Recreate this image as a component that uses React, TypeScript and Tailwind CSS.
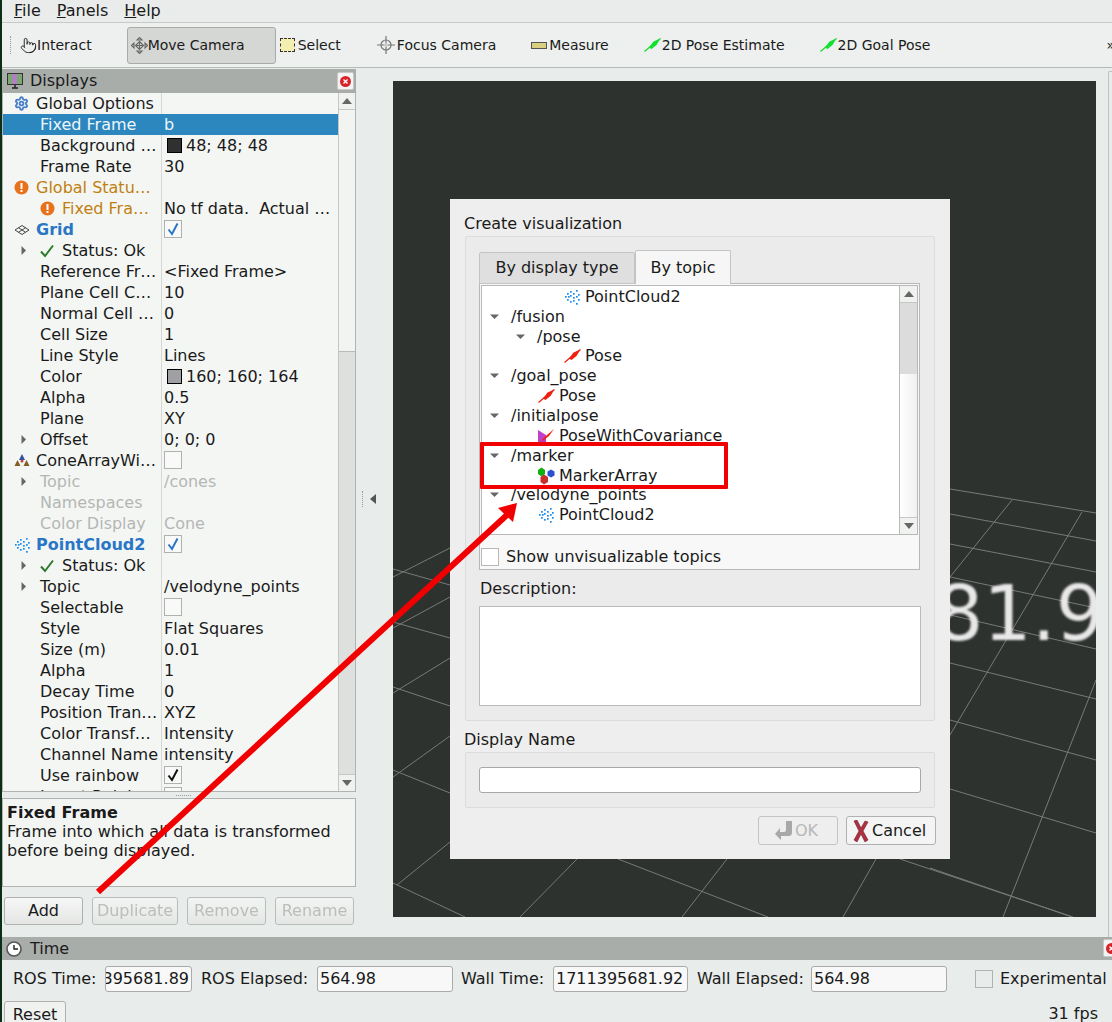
import { ReactNode } from "react";
import { Settings, Pointer } from "lucide-react";

type Row = {
  label: string;
  value?: string;
  kind: "top" | "child" | "warn";
  icon?: ReactNode;
  arrow?: boolean;
  tone?: "blue" | "orange" | "gray" | "white";
  swatch?: string;
  check?: "on" | "black" | "off";
};

function PointCloudIcon() {
  const pts = [[1,7],[3,4],[3,10],[6,2],[6,6],[6,12],[9,8],[9,4],[9,11],[12,1],[12,14],[12,7],[14,10],[4,7],[14,5]];
  return (
    <svg width="16" height="16" viewBox="0 0 16 16">
      {pts.map((p, i) => <rect key={i} x={p[0]} y={p[1]} width="1.7" height="1.7" fill="#1a8cf0" />)}
    </svg>
  );
}

function PoseIcon({ color = "#f02010" }: { color?: string }) {
  return (
    <svg width="17" height="14" viewBox="0 0 17 14">
      <path d="M0.5 13.5 L7 8 M9 6 L16.5 0.5" stroke={color} strokeWidth="1.3" fill="none" />
      <path d="M5 9.5 L9.5 3.5 L16.5 0.5 L12.5 7 L7.5 11 Z" fill={color} />
    </svg>
  );
}

function CovarianceIcon() {
  return (
    <svg width="17" height="16" viewBox="0 0 17 16">
      <path d="M0 2 L8 7 L8 14 L0 14 Z" fill="#c040c8" />
      <path d="M3 13 L9 7 L16 1 L11 8 L6 12 Z" fill="#f02010" />
    </svg>
  );
}

function MarkerIcon() {
  return (
    <svg width="17" height="18" viewBox="0 0 17 18">
      <path d="M0 3 L3.5 0.5 L7 3 L7 7 L3.5 9.5 L0 7 Z" fill="#10b010" />
      <path d="M9.5 4.5 L13 2.5 L16.5 4.5 L16.5 8.5 L13 10.5 L9.5 8.5 Z" fill="#2850d0" />
      <path d="M2.5 10 L6 7.5 L10 10 L10 15 L6 17.5 L2.5 15 Z" fill="#c83030" />
    </svg>
  );
}

function WarnIcon() {
  return (
    <svg width="15" height="15" viewBox="0 0 15 15">
      <circle cx="7.5" cy="7.5" r="7" fill="#e8711c" />
      <rect x="6.5" y="3" width="2" height="6" fill="#fff" />
      <rect x="6.5" y="10" width="2" height="2" fill="#fff" />
    </svg>
  );
}

function GridIcon() {
  return (
    <svg width="16" height="12" viewBox="0 0 16 12" fill="none" stroke="#444" strokeWidth="1">
      <path d="M1 6 L8 1.5 L15 6 L8 10.5 Z" />
      <path d="M4.5 3.7 L11.5 8.3 M11.5 3.7 L4.5 8.3" />
    </svg>
  );
}

function ConeIcon() {
  return (
    <svg width="16" height="14" viewBox="0 0 16 14">
      <path d="M8 0 L11 6 L5 6 Z" fill="#3050a0" />
      <path d="M3.5 6 L6.5 12 L0.5 12 Z" fill="#806020" />
      <path d="M12.5 6 L15.5 12 L9.5 12 Z" fill="#806020" />
      <circle cx="8" cy="7" r="1.5" fill="#c04040" />
    </svg>
  );
}

function TreeArrow({ open }: { open?: boolean }) {
  return (
    <svg width="10" height="10" viewBox="0 0 10 10" className="shrink-0">
      {open ? <path d="M0 2.5 H9 L4.5 7 Z" fill="#666" /> : <path d="M2.5 0 V9 L7 4.5 Z" fill="#666" />}
    </svg>
  );
}

function GreenCheck() {
  return (
    <svg width="14" height="14" viewBox="0 0 14 14" fill="none">
      <path d="M1 7.5 L5 12 L13 1.5" stroke="#2d7a2d" strokeWidth="2" />
    </svg>
  );
}

function CheckBox({ state }: { state: "on" | "black" | "off" }) {
  return (
    <span className="w-[18px] h-[18px] mb-px border border-[#aeb1ae] bg-[#f8f9f8] flex items-center justify-center">
      {state !== "off" && (
        <svg width="14" height="14" viewBox="0 0 14 14" fill="none">
          <path d="M2.5 7.5 L6 12 L11.5 1.5" stroke={state === "on" ? "#2a76c6" : "#111"} strokeWidth="2" />
        </svg>
      )}
    </span>
  );
}

const rows: Row[] = [
  { label: "Global Options", kind: "top", icon: <Settings size={15} color="#4a7fc9" strokeWidth={3} /> },
  { label: "Fixed Frame", value: "b", kind: "child", tone: "white" },
  { label: "Background …", value: "48; 48; 48", kind: "child", swatch: "bg-[#303030]" },
  { label: "Frame Rate", value: "30", kind: "child" },
  { label: "Global Statu…", kind: "top", tone: "orange", icon: <WarnIcon /> },
  { label: "Fixed Fra…", value: "No tf data.  Actual …", kind: "warn", tone: "orange", icon: <WarnIcon /> },
  { label: "Grid", kind: "top", tone: "blue", icon: <GridIcon />, check: "on" },
  { label: "Status: Ok", kind: "warn", arrow: true, icon: <GreenCheck /> },
  { label: "Reference Fr…", value: "<Fixed Frame>", kind: "child" },
  { label: "Plane Cell C…", value: "10", kind: "child" },
  { label: "Normal Cell …", value: "0", kind: "child" },
  { label: "Cell Size", value: "1", kind: "child" },
  { label: "Line Style", value: "Lines", kind: "child" },
  { label: "Color", value: "160; 160; 164", kind: "child", swatch: "bg-[#a0a0a4]" },
  { label: "Alpha", value: "0.5", kind: "child" },
  { label: "Plane", value: "XY", kind: "child" },
  { label: "Offset", value: "0; 0; 0", kind: "child", arrow: true },
  { label: "ConeArrayWi…", kind: "top", icon: <ConeIcon />, check: "off" },
  { label: "Topic", value: "/cones", kind: "child", arrow: true, tone: "gray" },
  { label: "Namespaces", kind: "child", tone: "gray" },
  { label: "Color Display", value: "Cone", kind: "child", tone: "gray" },
  { label: "PointCloud2", kind: "top", tone: "blue", icon: <PointCloudIcon />, check: "on" },
  { label: "Status: Ok", kind: "warn", arrow: true, icon: <GreenCheck /> },
  { label: "Topic", value: "/velodyne_points", kind: "child", arrow: true },
  { label: "Selectable", kind: "child", check: "off" },
  { label: "Style", value: "Flat Squares", kind: "child" },
  { label: "Size (m)", value: "0.01", kind: "child" },
  { label: "Alpha", value: "1", kind: "child" },
  { label: "Decay Time", value: "0", kind: "child" },
  { label: "Position Tran…", value: "XYZ", kind: "child" },
  { label: "Color Transf…", value: "Intensity", kind: "child" },
  { label: "Channel Name", value: "intensity", kind: "child" },
  { label: "Use rainbow", kind: "child", check: "black" },
  { label: "Invert Rainbow", kind: "child", check: "off" },
];

const toneClass = {
  blue: "text-[#2a76c6] font-bold",
  orange: "text-[#c08010]",
  gray: "text-[#b4b6b4]",
  white: "text-[#eef6fb]",
};

function DisplayRow({ row, selected }: { row: Row; selected?: boolean }) {
  const tone = row.tone ? toneClass[row.tone] : "text-[#1a1a1a]";
  const valueTone = row.tone === "gray" ? "text-[#b4b6b4]" : row.tone === "white" ? "text-[#eef6fb]" : "text-[#1a1a1a]";
  return (
    <div className={`flex h-[21px] shrink-0 items-center ${selected ? "bg-[#2d87bf]" : ""}`}>
      <div className={`flex items-center w-[159px] h-full overflow-hidden whitespace-nowrap ${row.kind === "top" ? "pl-[11px]" : "pl-[16px]"} ${selected ? "" : "border-r border-[#d5d8d5]"}`}>
        {row.kind === "top" ? (
          <span className="w-[22px] flex items-center shrink-0">{row.icon}</span>
        ) : (
          <>
            <span className="w-[21px] shrink-0 flex items-center">{row.arrow && <TreeArrow />}</span>
            {row.kind === "warn" && <span className="w-[22px] shrink-0 flex items-center">{row.icon}</span>}
          </>
        )}
        <span className={tone}>{row.label}</span>
      </div>
      <div className={`flex items-center pl-[2px] whitespace-pre ${valueTone}`}>
        {row.check && <CheckBox state={row.check} />}
        {row.swatch && <span className={`w-[15px] h-[15px] ml-[3px] mr-[4px] border border-black ${row.swatch}`} />}
        {row.value}
      </div>
    </div>
  );
}

function ScrollButton({ up }: { up?: boolean }) {
  return (
    <div className={`h-[17px] shrink-0 flex items-center justify-center bg-[#f0f2f0] ${up ? "border-b" : "border-t"} border-[#c4c7c4]`}>
      <svg width="10" height="6" viewBox="0 0 10 6">
        <path d={up ? "M0 6 H10 L5 0 Z" : "M0 0 H10 L5 6 Z"} fill="#666" />
      </svg>
    </div>
  );
}

function ToolButton({ icon, label, className = "" }: { icon: ReactNode; label: string; className?: string }) {
  return (
    <div className={`flex items-center h-[37px] shrink-0 ${className}`}>
      {icon}
      <span>{label}</span>
    </div>
  );
}

function Btn({ label, disabled, className = "" }: { label: string; disabled?: boolean; className?: string }) {
  return (
    <div className={`h-[28px] flex items-center justify-center rounded-[3px] border border-[#aeb1ae] bg-gradient-to-b from-[#f6f7f6] to-[#e4e6e4] shrink-0 ${disabled ? "text-[#b0b2b0] opacity-80" : "text-[#1a1a1a]"} ${className}`}>
      {label}
    </div>
  );
}

function TimeField({ label, value, className, labelClass }: { label: string; value: string; className: string; labelClass: string }) {
  return (
    <>
      <span className={`shrink-0 ${labelClass}`}>{label}</span>
      <div className={`h-[26px] shrink-0 rounded-[3px] border border-[#a8aba8] bg-[#f7f8f7] overflow-hidden whitespace-nowrap flex items-center pl-[2px] ${className}`}>
        {value}
      </div>
    </>
  );
}

function CloseBtn() {
  return (
    <div className="w-[17px] h-[18px] bg-[#f4f4f4] rounded-[2px] border border-[#c8c8c8] flex items-center justify-center shrink-0">
      <svg width="11" height="11" viewBox="0 0 11 11">
        <circle cx="5.5" cy="5.5" r="5.5" fill="#d8232a" />
        <path d="M3.5 3.5 L7.5 7.5 M7.5 3.5 L3.5 7.5" stroke="#fff" strokeWidth="1.4" />
      </svg>
    </div>
  );
}

const gridLines = [
  [393,569,450,585],[393,622,450,638],[393,687,450,706],[393,770,450,793],[393,883,465,917],
  [393,577,450,548],[393,628,450,597],[393,693,450,658],[393,777,450,736],[397,885,450,842],
  [950,489,1096,513],[950,514,1096,541],[950,544,1096,572],[950,577,1096,608],[950,615,1096,649],
  [950,663,1096,699],[950,720,1096,760],[950,789,1096,833],[930,868,1072,917],
  [950,577,1012,500],[950,735,1082,512],[1003,917,1096,680],
  [618,859,768,917],[900,859,1073,917],[520,917,577,859],[682,917,727,859],[843,917,876,859],
];

const topicRows: { label: string; pad: string; open?: boolean; icon?: ReactNode }[] = [
  { label: "PointCloud2", pad: "pl-[82px]", icon: <PointCloudIcon /> },
  { label: "/fusion", pad: "pl-[8px]", open: true },
  { label: "/pose", pad: "pl-[34px]", open: true },
  { label: "Pose", pad: "pl-[82px]", icon: <PoseIcon /> },
  { label: "/goal_pose", pad: "pl-[8px]", open: true },
  { label: "Pose", pad: "pl-[56px]", icon: <PoseIcon /> },
  { label: "/initialpose", pad: "pl-[8px]", open: true },
  { label: "PoseWithCovariance", pad: "pl-[56px]", icon: <CovarianceIcon /> },
  { label: "/marker", pad: "pl-[8px]", open: true },
  { label: "MarkerArray", pad: "pl-[56px]", icon: <MarkerIcon /> },
  { label: "/velodyne_points", pad: "pl-[8px]", open: true },
  { label: "PointCloud2", pad: "pl-[56px]", icon: <PointCloudIcon /> },
];

function CreateDialog() {
  return (
    <div className="absolute left-[450px] top-[199px] w-[500px] h-[660px] bg-[#eeeeee] text-[#1a1a1a] flex flex-col pl-[14px] pr-[15px]">
      <div className="h-[37px] pt-[15px] leading-[19px] shrink-0">Create visualization</div>
      <div className="h-[485px] shrink-0 ml-px border border-[#dcdcdc] rounded-[2px] bg-[#ebebeb] px-[14px] pt-[13px] flex flex-col">
        <div className="flex items-end h-[34px] shrink-0 -mb-px -ml-px relative z-10">
          <div className="w-[156px] h-[32px] bg-[#dfdfdf] border border-[#c4c4c4] rounded-t-[2px] flex items-center justify-center">By display type</div>
          <div className="w-[96px] h-[34px] bg-[#f6f6f6] border border-[#c4c4c4] border-b-0 rounded-t-[2px] flex items-center justify-center">By topic</div>
        </div>
        <div className="h-[287px] shrink-0 -ml-px border border-[#b8b8b8] bg-[#f8f8f8] flex flex-col p-px">
          <div className="h-[250px] shrink-0 border border-[#b8b8b8] bg-white flex overflow-hidden">
            <div className="flex-1 flex flex-col pt-px">
              {topicRows.map((r, i) => (
                <div key={i} className={`h-[19.85px] shrink-0 flex items-center whitespace-nowrap ${r.pad}`}>
                  {r.open ? <span className="w-[21px] shrink-0"><TreeArrow open /></span> : <span className="w-[22px] shrink-0 flex items-center">{r.icon}</span>}
                  <span className={r.open ? "" : "-ml-px"}>{r.label}</span>
                </div>
              ))}
            </div>
            <div className="w-[18px] shrink-0 border-l border-[#b8b8b8] flex flex-col">
              <ScrollButton up />
              <div className="h-[71px] shrink-0 bg-[#dcdcdc]" />
              <div className="flex-1 bg-gradient-to-r from-[#ffffff] to-[#f0f0f0]" />
              <ScrollButton />
            </div>
          </div>
          <div className="flex-1 flex items-center gap-[7px] pt-[10px]">
            <span className="w-[18px] h-[18px] border border-[#b8b8b8] bg-white" />
            <span>Show unvisualizable topics</span>
          </div>
        </div>
        <div className="mt-[7px] h-[29px] shrink-0 leading-[19px] pt-[2px]">Description:</div>
        <div className="h-[100px] shrink-0 -mx-px border border-[#bbbbbb] bg-white" />
      </div>
      <div className="h-[31px] shrink-0 pt-[9px] leading-[19px]">Display Name</div>
      <div className="h-[56px] shrink-0 ml-px border border-[#dcdcdc] rounded-[2px] bg-[#ebebeb] px-[13px] flex items-center">
        <div className="w-full h-[26px] border border-[#a8a8a8] rounded-[3px] bg-white" />
      </div>
      <div className="flex justify-end gap-[8px] mt-[8px] -mr-px">
        <div className="w-[80px] h-[29px] rounded-[3px] border border-[#c4c4c4] flex items-center pl-[15px] text-[#b8b8b8] gap-[1px]">
          <svg width="20" height="22" viewBox="0 0 20 22">
            <path d="M18 1 H12 V10 Q12 12 10 12 H6 V8 L1 14 L7 20 V16 H15 Q18 16 18 12 Z" fill="#a8a8a8" />
          </svg>
          OK
        </div>
        <div className="w-[90px] h-[29px] rounded-[3px] border border-[#b0b0b0] flex items-center pl-[6px] gap-[3px] bg-[#f4f4f4]">
          <svg width="16" height="22" viewBox="0 0 16 22">
            <path d="M1 1 L4 0 L8 8 L12 1 L15 2 L10 11 L15 20 L12 22 L8 14 L4 22 L1 20 L6 11 Z" fill="#b03040" stroke="#6a2030" strokeWidth="0.6" />
          </svg>
          Cancel
        </div>
      </div>
    </div>
  );
}

export default function App() {
  return (
    <div className="relative flex w-[1112px] h-[1022px] overflow-hidden bg-[#e8ecea] text-[#1a1a1a] font-['DejaVu_Sans',sans-serif] text-[16px]">
      <div className="w-[2px] shrink-0 bg-[#0c2e18]" />
      <div className="flex flex-col w-[1110px] shrink-0">
        {/* menu */}
        <div className="h-[23px] shrink-0 flex items-center pl-[12px] pb-px gap-[16px] border-b border-[#c6cac7] bg-[#e9ecea]">
          <span><u>F</u>ile</span>
          <span><u>P</u>anels</span>
          <span><u>H</u>elp</span>
        </div>
        {/* toolbar */}
        <div className="h-[45px] shrink-0 flex items-center border-b border-[#b8bbb8] bg-[#edf0ee] text-[14px]">
          <span className="w-px h-[18px] ml-[8px] border-l border-dotted border-[#999]" />
          <ToolButton className="ml-[9px]" icon={<Pointer size={17} strokeWidth={1.3} />} label="Interact" />
          <ToolButton
            className="ml-[35px] w-[149px] pl-[3px] bg-[#d5d7d5] border border-[#a8aba8] rounded-[3px]"
            icon={
              <svg width="17" height="17" viewBox="0 0 17 17" fill="none" stroke="#666" strokeWidth="1.1">
                <path d="M8.5 0.5 L11 3 H6 Z M8.5 16.5 L11 14 H6 Z M0.5 8.5 L3 6 V11 Z M16.5 8.5 L14 6 V11 Z" />
                <path d="M8.5 4.5 L12.5 8.5 L8.5 12.5 L4.5 8.5 Z M4.5 8.5 H12.5 M8.5 4.5 V12.5" />
              </svg>
            }
            label="Move Camera"
          />
          <ToolButton
            className="ml-[4px]"
            icon={<span className="w-[15px] h-[14px] mr-[3px] bg-[#f3efb0] border border-dashed border-[#333]" />}
            label="Select"
          />
          <ToolButton
            className="ml-[36px] gap-[2px]"
            icon={
              <svg width="18" height="18" viewBox="0 0 18 18" fill="none" stroke="#777" strokeWidth="1.2">
                <circle cx="9" cy="9" r="5" />
                <path d="M9 0 V18 M0 9 H18" />
                <path d="M9 6.5 L11.5 9 L9 11.5 L6.5 9 Z" fill="#ccc" stroke="none" />
              </svg>
            }
            label="Focus Camera"
          />
          <ToolButton
            className="ml-[35px] gap-[2px]"
            icon={
              <svg width="16" height="7" viewBox="0 0 16 7">
                <rect x="0.5" y="0.5" width="15" height="6" fill="#d8cf80" stroke="#555" />
              </svg>
            }
            label="Measure"
          />
          <ToolButton className="ml-[35px] gap-[1px]" icon={<PoseIcon color="#10e030" />} label="2D Pose Estimate" />
          <ToolButton className="ml-[35px] gap-[1px]" icon={<PoseIcon color="#10e030" />} label="2D Goal Pose" />
          <span className="ml-auto mr-[-3px]">»</span>
        </div>
        {/* middle */}
        <div className="h-[869px] shrink-0 flex">
          <div className="w-[354px] shrink-0 flex flex-col">
            <div className="h-[24px] mt-px shrink-0 bg-[#a9adaa] flex items-center pl-[5px] pr-[2px] justify-between">
              <div className="flex items-center gap-[7px]">
                <svg width="16" height="16" viewBox="0 0 16 16">
                  <rect x="0.5" y="0.5" width="15" height="11" fill="#7aa870" stroke="#333" />
                  <rect x="5" y="1" width="5" height="10" fill="#b080c0" />
                  <path d="M5 15 H11 M8 12 V15" stroke="#222" strokeWidth="1.5" />
                </svg>
                <span>Displays</span>
              </div>
              <CloseBtn />
            </div>
            <div className="h-[699px] shrink-0 flex border-b border-l border-r border-[#b0b3b0] bg-[#f4f6f4] overflow-hidden">
              <div className="w-[335px] shrink-0 flex flex-col overflow-hidden">
                {rows.map((r, i) => <DisplayRow key={i} row={r} selected={i === 1} />)}
              </div>
              <div className="flex-1 border-l border-[#c4c7c4] flex flex-col">
                <ScrollButton up />
                <div className="h-[241px] shrink-0 bg-[#f2f4f2]" />
                <div className="flex-1 bg-[#dee0de] border-t border-[#b8bbb8]" />
                <ScrollButton />
              </div>
            </div>
            <div className="h-[6px] shrink-0 flex items-center justify-center pl-[8px]">
              <span className="w-[15px] border-t border-dotted border-[#999]" />
            </div>
            <div className="h-[89px] shrink-0 border border-[#b0b3b0] bg-[#f3f5f3] pl-[4px] pt-[4px] leading-[19px]">
              <div className="font-bold">Fixed Frame</div>
              <div>Frame into which all data is transformed</div>
              <div>before being displayed.</div>
            </div>
            <div className="flex gap-[9px] pl-[2px] mt-[10px]">
              <Btn label="Add" className="w-[79px]" />
              <Btn label="Duplicate" disabled className="w-[86px]" />
              <Btn label="Remove" disabled className="w-[79px]" />
              <Btn label="Rename" disabled className="w-[79px]" />
            </div>
          </div>
          <div className="w-[37px] shrink-0 flex items-center pl-[6px] pb-[8px] gap-[7px]">
            <span className="h-[16px] border-l border-dotted border-[#999]" />
            <svg width="6" height="10" viewBox="0 0 6 10">
              <path d="M6 0 V10 L0 5 Z" fill="#555" />
            </svg>
          </div>
          <div className="relative w-[703px] h-[836px] mt-[13px] bg-[#2e322e] shrink-0 overflow-hidden">
            <svg width="703" height="836" viewBox="393 81 703 836" className="absolute inset-0">
              {gridLines.map((l, i) => (
                <line key={i} x1={l[0]} y1={l[1]} x2={l[2]} y2={l[3]} stroke="#777a77" strokeWidth="1" />
              ))}
            </svg>
            <span className="absolute left-[542px] top-[488px] text-[76px] leading-[90px] text-[#e8e8e8] blur-[1px] whitespace-nowrap">81.92</span>
          </div>
          <div className="ml-[12px] mt-[3px] flex-1 border-l border-t border-[#c0c3c0] rounded-tl-[2px]" />
        </div>
        {/* time panel */}
        <div className="h-[23px] shrink-0 bg-[#a9adaa] flex items-center pl-[4px] gap-[8px] relative">
          <svg width="16" height="16" viewBox="0 0 16 16">
            <circle cx="8" cy="8" r="7" fill="#fff" stroke="#555" strokeWidth="1.6" />
            <path d="M8 4 V8 H12" stroke="#222" strokeWidth="1.4" fill="none" />
          </svg>
          <span>Time</span>
          <span className="absolute left-[1101px] top-[2px]"><CloseBtn /></span>
        </div>
        <div className="h-[39px] shrink-0 flex items-center whitespace-nowrap pl-[11px] pb-[1px]">
          <TimeField label="ROS Time:" value="395681.89" labelClass="w-[92px]" className="w-[87px] justify-end pr-[2px]" />
          <TimeField label="ROS Elapsed:" value="564.98" labelClass="ml-[9px] w-[116px]" className="w-[136px]" />
          <TimeField label="Wall Time:" value="1711395681.92" labelClass="ml-[8px] w-[92px]" className="w-[135px]" />
          <TimeField label="Wall Elapsed:" value="564.98" labelClass="ml-[9px] w-[114px]" className="w-[136px]" />
          <span className="w-[18px] h-[18px] ml-[28px] border border-[#b0b3b0] shrink-0" />
          <span className="ml-[7px]">Experimental</span>
        </div>
        <div className="flex-1 flex items-start justify-between pl-[2px] pt-[2px] pr-[14px]">
          <div className="w-[62px] h-[28px] rounded-[3px] border border-[#aeb1ae] bg-[#f0f2f0] flex items-center justify-center">Reset</div>
          <span className="pt-[1px]">31 fps</span>
        </div>
      </div>
      <CreateDialog />
      {/* annotation */}
      <div className="absolute left-[480px] top-[442px] w-[248px] h-[47px] border-[4px] border-[#f00000] rounded-[1px]" />
      <svg width="1112" height="1022" viewBox="0 0 1112 1022" className="absolute inset-0 pointer-events-none">
        <path d="M98 892 L508 514" stroke="#f00000" strokeWidth="6" fill="none" />
        <path d="M517 503 L498 508 L513 522 Z" fill="#f00000" />
      </svg>
    </div>
  );
}
